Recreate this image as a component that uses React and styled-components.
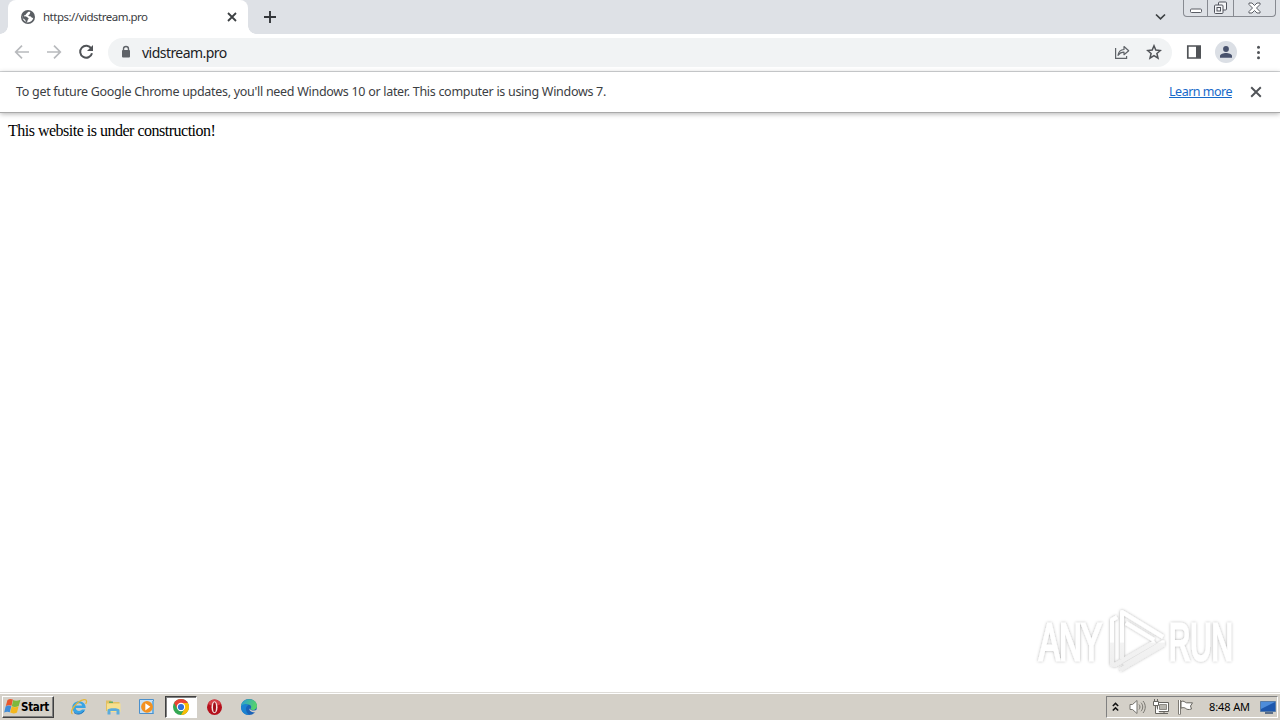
import React from 'react';
import styled, { createGlobalStyle } from 'styled-components';

const GlobalStyle = createGlobalStyle`
  body {
    margin: 0;
    background: #fff;
    overflow: hidden;
  }
  svg {
    display: block;
    flex: none;
  }
`;

const Screen = styled.div`
  position: relative;
  display: flex;
  flex-direction: column;
  width: 1280px;
  height: 720px;
  background: #fff;
`;

const TabStrip = styled.div`
  display: flex;
  height: 34px;
  background: #dee1e6;
`;

const Tab = styled.div`
  position: relative;
  display: flex;
  align-items: center;
  box-sizing: border-box;
  width: 240px;
  height: 34px;
  margin-left: 8px;
  padding: 0 11px 0 13px;
  background: #fff;
  border-radius: 8px 8px 0 0;

  &::before,
  &::after {
    content: '';
    position: absolute;
    bottom: 0;
    width: 8px;
    height: 8px;
  }
  &::before {
    left: -8px;
    background: radial-gradient(circle at 0 0, transparent 7.5px, #fff 8px);
  }
  &::after {
    right: -8px;
    background: radial-gradient(circle at 100% 0, transparent 7.5px, #fff 8px);
  }
`;

const Label = styled.span`
  font-family: ${p => p.$font || "'Noto Sans', sans-serif"};
  font-size: ${p => p.$size}px;
  letter-spacing: ${p => p.$spacing || 0}px;
  line-height: 16px;
  font-weight: ${p => p.$weight || 400};
  color: ${p => p.$color || '#3c4043'};
  white-space: nowrap;
`;

const TabTitle = styled(Label)`
  flex: 1;
  margin-left: 8px;
`;

const NewTab = styled.div`
  padding: 11px 0 0 16px;
`;

const Chevron = styled.div`
  margin-left: auto;
  padding: 13px 17px 0 0;
`;

const WindowButtons = styled.div`
  display: flex;
  box-sizing: border-box;
  width: 93px;
  height: 17px;
  margin-right: 4px;
  border: 1px solid #878a91;
  border-top: 0;
  border-radius: 0 0 4px 4px;
`;

const WindowButton = styled.div`
  display: flex;
  align-items: center;
  justify-content: center;
  width: ${p => p.$width}px;
  border-left: ${p => (p.$first ? 0 : '1px solid #878a91')};
`;

const Toolbar = styled.div`
  display: flex;
  align-items: center;
  box-sizing: border-box;
  height: 38px;
  padding: 0 12px 1px 12px;
  border-bottom: 1px solid #d6d8da;
  background: #fff;
`;

const NavButtons = styled.div`
  display: flex;
  gap: 12px;
`;

const Omnibox = styled.div`
  display: flex;
  align-items: center;
  box-sizing: border-box;
  width: 1064px;
  height: 29px;
  margin-left: 12px;
  padding: 0 10px 0 12px;
  border-radius: 15px;
  background: #f1f3f4;
`;

const Url = styled(Label)`
  flex: 1;
  margin-left: 10px;
  padding-top: 1px;
`;

const OmniboxIcons = styled.div`
  display: flex;
  gap: 16px;
`;

const ToolbarIcons = styled.div`
  display: flex;
  align-items: center;
  margin-left: 14px;
`;

const Avatar = styled.div`
  display: flex;
  align-items: center;
  justify-content: center;
  width: 22px;
  height: 22px;
  margin: 0 11px 0 14px;
  border-radius: 50%;
  background: #dbdfe5;
`;

const InfoBar = styled.div`
  display: flex;
  align-items: center;
  box-sizing: border-box;
  height: 41px;
  padding: 0 18px 0 16px;
  border-bottom: 1px solid #a9a9a9;
  background: #fff;
  box-shadow: 0 1px 5px rgba(0, 0, 0, 0.3);
`;

const LearnMore = styled(Label)`
  margin: 0 18px 0 auto;
  text-decoration: underline;
`;

const Page = styled.main`
  flex: 1;
  padding: 9px 8px;
  font-family: 'Liberation Serif', serif;
  font-size: 16px;
  line-height: 18px;
  letter-spacing: -0.5px;
  color: #000;
`;

const Watermark = styled.div`
  position: absolute;
  left: 1030px;
  top: 600px;
`;

const Taskbar = styled.footer`
  display: flex;
  align-items: center;
  box-sizing: border-box;
  height: 28px;
  padding: 1px 2px 1px 2px;
  border-top: 1px solid #dedcd8;
  background: #d4d0c8;
  box-shadow: inset 0 1px 0 #fff;
`;

const StartButton = styled.div`
  display: flex;
  align-items: center;
  box-sizing: border-box;
  width: 52px;
  height: 22px;
  padding-left: 1px;
  border: 1px solid;
  border-color: #fff #404040 #404040 #fff;
  box-shadow: inset -1px -1px 0 #808080;
`;

const Pinned = styled.div`
  display: flex;
  margin-left: 9px;
  gap: 2px;
`;

const TaskButton = styled.div`
  display: flex;
  align-items: center;
  justify-content: center;
  box-sizing: border-box;
  width: 32px;
  height: 22px;
  border: 1px solid transparent;
  ${p =>
    p.$active &&
    `
    border-color: #404040 #fff #fff #404040;
    background: #fff;
    box-shadow: inset 1px 1px 0 #808080;
  `}
`;

const Tray = styled.div`
  display: flex;
  align-items: center;
  box-sizing: border-box;
  width: 172px;
  height: 22px;
  margin-left: auto;
  padding-left: 5px;
  border: 1px solid;
  border-color: #808080 #fff #fff #808080;
`;

const TrayItem = styled.div`
  display: flex;
  margin-left: ${p => p.$left || 0}px;
`;

const Cross = ({ size, color = '#3c4043', width = 1.8 }) => (
  <svg width={size} height={size} viewBox="0 0 10 10">
    <path d="M1 1l8 8M9 1l-8 8" stroke={color} strokeWidth={width} />
  </svg>
);

const GlobeIcon = () => (
  <svg width="14" height="14" viewBox="0 0 14 14">
    <circle cx="7" cy="7" r="7" fill="#5a5e63" />
    <path d="M8.2 1.7C6 1.5 7 3 5.6 3.5 4.6 4 5 5 4 5.2c-.7.1-1.3.4-1 .9.6.8 2.7.2 3.4 1.2.5.7 1.4.6 1.2 1.5-.2.8-1.2.8-1 1.8.1.6-.5 1.3-.9 1.3C3 11.3 1.4 9.3 1.6 6.8L2 5.500 1.8 8.200c1 1 2 .8 2.500 2L5.400 12.300c4 .5 6.500-1.500 6.900-4.500-1 .4-1.800-.3-2.300-1C9.200 6 7.500 6.500 7.300 5.600c-.2-1 1.500-.8 1.500-1.700 0-.7.6-1 .4-2z" fill="#fff" />
  </svg>
);

const ArrowIcon = ({ flip }) => (
  <svg width="20" height="20" viewBox="0 0 20 20">
    <g transform={flip ? 'translate(20 0) scale(-1 1)' : undefined} fill="none" stroke="#b8babd" strokeWidth="1.7">
      <path d="M17 10H4M10 3.700L3.700 10l6.300 6.300" />
    </g>
  </svg>
);

const ReloadIcon = () => (
  <svg width="20" height="20" viewBox="0 0 20 20">
    <path d="M15.300 6.600A6 6 0 1 0 16 11.200" fill="none" stroke="#505357" strokeWidth="2" />
    <path d="M17 3v6h-6z" fill="#505357" />
  </svg>
);

const LockIcon = () => (
  <svg width="12" height="14" viewBox="0 0 12 14">
    <path d="M3.500 6V4a2.500 2.500 0 0 1 5 0v2" fill="none" stroke="#5f6368" strokeWidth="1.400" />
    <rect x="2" y="5" width="8" height="7.500" rx="1" fill="#5f6368" />
  </svg>
);

const ShareIcon = () => (
  <svg width="16" height="16" viewBox="0 0 16 16" fill="none" stroke="#5f6368" strokeWidth="1.200">
    <path d="M1.600 4v10.400h11V12" />
    <path d="M4 11.300c.5-3.600 2.500-5.600 6-5.800V2.500l4.700 4.200-4.700 4V8.200c-2.700 0-4.500 1-6 3.100z" strokeLinejoin="round" />
  </svg>
);

const StarIcon = () => (
  <svg width="16" height="16" viewBox="0 0 16 16">
    <path d="M8 1.800l1.800 4.300 4.600.4-3.500 3 1.100 4.600L8 11.600l-4 2.500 1.100-4.600-3.500-3 4.600-.4z" fill="none" stroke="#505357" strokeWidth="1.500" />
  </svg>
);

const PanelIcon = () => (
  <svg width="15" height="14" viewBox="0 0 15 14">
    <path d="M1.800 1h12.400v12H1.800z" fill="none" stroke="#505357" strokeWidth="1.700" />
    <path d="M10 1h5v12h-5z" fill="#505357" />
  </svg>
);

const PersonIcon = () => (
  <svg width="14" height="14" viewBox="0 0 14 14" fill="#47516c">
    <circle cx="7" cy="4" r="2.900" />
    <path d="M1 12.800V11c0-2 3.500-3 6-3s6 1 6 3v1.800z" />
  </svg>
);

const MenuIcon = () => (
  <svg width="20" height="16" viewBox="0 0 20 16" fill="#505357">
    <circle cx="10.500" cy="3.300" r="1.500" />
    <circle cx="10.500" cy="8.500" r="1.500" />
    <circle cx="10.500" cy="13.700" r="1.500" />
  </svg>
);

const FlagLogo = () => (
  <svg width="17" height="17" viewBox="0 0 17 17">
    <path d="M3.500 2C5.500.5 7 .7 8.900 1.600L7.500 7.800C5.600 6.900 4 6.900 1.800 8.100z" fill="#e8572c" />
    <path d="M9.200 2c2 1 4 1 7.300-.3L14.700 8c-2.600 1.200-4.800 1.200-6.900.3z" fill="#7eb83c" />
    <path d="M1.600 8.500c2.100-1.200 3.700-1.100 5.700-.3l-1.500 6c-1.900-.8-3.600-.7-5.600.4z" fill="#3f8cd8" />
    <path d="M7.700 8.500c2 .9 4.300.9 6.900-.2L13 14.500c-2.300 1.200-4.500 1.200-6.800.1z" fill="#f4b71e" />
  </svg>
);

const ExplorerIcon = () => (
  <svg width="18" height="18" viewBox="0 0 18 18">
    <path d="M15.700 10.100H5.800c.2 3.400 5 3.500 6.200 1.400h3.300c-2.200 6.900-13.100 5.700-13-2.100C2.500 1.300 15.900.9 15.700 10.100zM5.900 7.500h6.200c-.5-3-5.600-3-6.200 0z" fill="#39a4e4" />
    <path d="M2.500 16C-1.500 14 7 2.800 14 1.700c3.500-.4 2.700 2.500 1.700 4.300" fill="none" stroke="#e5b73a" strokeWidth="1.300" />
    <path d="M4 14.500c3 2.500 7.500 2 9.800-1.500" fill="none" stroke="#2270bb" strokeWidth="1" />
  </svg>
);

const FolderIcon = () => (
  <svg width="18" height="18" viewBox="0 0 18 18">
    <path d="M2 2.500h5l1 1.500h7.500v9H2z" fill="#e2c063" />
    <path d="M3 5.500h13.500V14H3z" fill="#f7e08e" />
    <path d="M5 3.500h4V5H5z" fill="#65ad65" />
    <path d="M3.500 16.500V12c0-2.500 12-2.500 12 0v4.500h-3V13h-6v3.500z" fill="#5babdc" />
  </svg>
);

const PlayerIcon = () => (
  <svg width="18" height="18" viewBox="0 0 18 18">
    <path d="M1.500 1.500h14v14h-14z" fill="#c6e0f5" stroke="#4b90cc" />
    <path d="M14 3h2v12h-2z" fill="#6eb0df" />
    <circle cx="9" cy="8.800" r="5.900" fill="#f39120" />
    <path d="M7.300 5.200v7.200l5-3.600z" fill="#fff" />
  </svg>
);

const ChromeIcon = () => (
  <svg width="18" height="18" viewBox="0 0 18 18">
    <circle cx="9" cy="9" r="8" fill="#34a853" />
    <path d="M2.070 5A8 8 0 0 1 15.930 5H9L5.540 11z" fill="#ea4335" />
    <path d="M15.930 5A8 8 0 0 1 9 17l3.460-6L9 5z" fill="#fbbc05" />
    <circle cx="9" cy="9" r="4.200" fill="#fff" />
    <circle cx="9" cy="9" r="3.100" fill="#2f71d9" />
  </svg>
);

const OperaIcon = () => (
  <svg width="18" height="18" viewBox="0 0 18 18">
    <ellipse cx="8.500" cy="9.200" rx="7.500" ry="7.800" fill="#b5101c" />
    <path d="M2 6C3.500 0 13.500 0 15 6 11.500 8 5.500 8 2 6z" fill="#d64047" />
    <ellipse cx="8.500" cy="9.200" rx="3" ry="6" fill="#f5e4e3" />
    <ellipse cx="8.500" cy="9.200" rx="1.500" ry="5" fill="#a30f19" />
  </svg>
);

const EdgeIcon = () => (
  <svg width="18" height="18" viewBox="0 0 18 18">
    <defs>
      <linearGradient id="edge" x1="0" y1="0" x2="1" y2=".3">
        <stop offset="0" stopColor="#289bd9" />
        <stop offset="1" stopColor="#55d36b" />
      </linearGradient>
    </defs>
    <circle cx="9" cy="9" r="8" fill="#1a62b7" />
    <path d="M1 8.500C1.500-1.500 17-1 17 8c0 4-5 4.800-6.600 3 1.800-2 .4-4.500-2.400-4.500-3 0-6 1-7 2z" fill="url(#edge)" />
    <path d="M1 9c1.500-4 6.500-3.600 7-1.500C4.500 9 6 14.500 9 16.900 4 17 1 13.500 1 9z" fill="#1b83d1" />
    <path d="M9.500 10.500c1.500 2.700 5 2.700 8 .7l.5 2c-1.500 1-3.500 1.500-5 1.100-2.500-.2-3.900-2-3.500-3.800z" fill="#d4d0c8" />
  </svg>
);

const TrayChevrons = () => (
  <svg width="7" height="10" viewBox="0 0 7 10" fill="none" stroke="#111" strokeWidth="1.500">
    <path d="M.8 4l2.700-2.600L6.200 4M.8 8.500l2.700-2.600 2.700 2.600" />
  </svg>
);

const SpeakerIcon = () => (
  <svg width="17" height="16" viewBox="0 0 17 16" fill="none" stroke="#77756f">
    <path d="M1 5.500h2.500L8 1.500v13l-4.500-4H1z" fill="#fff" strokeLinejoin="round" />
    <path d="M10 5.500c1.300 1.500 1.300 3.500 0 5M12 3.700c2.300 2.500 2.300 6 0 8.500M14 2c3 3.500 3 8.500 0 12" />
  </svg>
);

const NetworkIcon = () => (
  <svg width="17" height="16" viewBox="0 0 17 16" fill="none" stroke="#66645f">
    <path d="M4.500 3.500h11v9h-11z" fill="#fff" />
    <path d="M6.500 5.500h7v5h-7z" fill="#b7b5ae" stroke="#8d8b85" />
    <path d="M7 14.500h8M11 13v1" />
    <path d="M.5 2.500h5v4h-5zM1.500 0v2M4.500 0v2M2.500 7v7.500H7" fill="#fff" />
  </svg>
);

const FlagIcon = () => (
  <svg width="17" height="16" viewBox="0 0 17 16">
    <path d="M2.500 1v14.500" stroke="#67655f" strokeWidth="2.600" />
    <path d="M2.500 1v14" stroke="#fff" />
    <path d="M4 2.500c3-1.200 3.500.8 5.500 1.300H15.500l-2 3.200 1 3c-3 1-4.500.5-6-.7-1.500-1-3-.8-4.500-.2z" fill="#fff" stroke="#67655f" />
  </svg>
);

const DesktopIcon = () => (
  <svg width="16" height="16" viewBox="0 0 16 16">
    <path d="M.5 2.500h15v10H.5z" fill="#1d57ad" stroke="#577ca8" />
    <path d="M1 3h14L1 10z" fill="#4d8cda" />
    <path d="M5 14h8" stroke="#334f75" strokeWidth="1.500" />
  </svg>
);

const AnyRunLogo = () => (
  <svg width="214" height="82" viewBox="0 0 214 82" overflow="visible">
    <defs>
      <linearGradient id="word" gradientUnits="userSpaceOnUse" x1="0" y1="10" x2="0" y2="72">
        <stop offset=".52" stopColor="#fff" />
        <stop offset=".53" stopColor="#f3f3f3" />
        <stop offset="1" stopColor="#eeeeee" />
      </linearGradient>
      <filter id="glow" filterUnits="userSpaceOnUse" x="0" y="0" width="214" height="82">
        <feDropShadow dx="0" dy="0" stdDeviation="1.800" floodColor="#000" floodOpacity=".32" />
      </filter>
    </defs>
    <g filter="url(#glow)" fill="url(#word)" stroke="url(#word)" fontFamily="'Liberation Sans', sans-serif" fontSize="51">
      <text transform="translate(9 60) scale(.61 1)" textLength="103" strokeWidth="2.500">ANY</text>
      <text transform="translate(139 60) scale(.58 1)" textLength="110" strokeWidth="2.500">RUN</text>
    </g>
    <g filter="url(#glow)" fill="none" stroke="url(#word)" strokeWidth="4" strokeLinejoin="round">
      <path d="M87 17l-5 3v44l3 1L125 42" />
      <path d="M92 59V12l41 25" />
      <path d="M96 23l28 17" />
      <path d="M90 70l43-25v-3L94 65" strokeWidth="3.500" />
    </g>
  </svg>
);

const pinned = [
  { name: 'explorer', Icon: ExplorerIcon },
  { name: 'files', Icon: FolderIcon },
  { name: 'player', Icon: PlayerIcon },
  { name: 'chrome', Icon: ChromeIcon, active: true },
  { name: 'opera', Icon: OperaIcon },
  { name: 'edge', Icon: EdgeIcon },
];

const App = () => (
  <>
    <GlobalStyle />
    <Screen>
      <TabStrip>
        <Tab>
          <GlobeIcon />
          <TabTitle $size={11.5} $spacing={-0.5}>https://vidstream.pro</TabTitle>
          <Cross size={10} />
        </Tab>
        <NewTab>
          <svg width="12" height="12" viewBox="0 0 12 12">
            <path d="M6 0v12M0 6h12" stroke="#33363a" strokeWidth="1.900" />
          </svg>
        </NewTab>
        <Chevron>
          <svg width="11" height="8" viewBox="0 0 11 8">
            <path d="M1 1.500l4.500 4.300L10 1.500" fill="none" stroke="#3c4043" strokeWidth="1.700" />
          </svg>
        </Chevron>
        <WindowButtons>
          <WindowButton $width={24} $first>
            <svg width="12" height="14" viewBox="0 0 12 14">
              <rect x=".5" y="8" width="11" height="3.500" rx="1" fill="#fff" stroke="#5a5d65" />
            </svg>
          </WindowButton>
          <WindowButton $width={25}>
            <svg width="13" height="14" viewBox="0 0 13 14" fill="#f5f6f8" stroke="#50535c">
              <rect x="4.500" y="1" width="8" height="8" rx="1" />
              <rect x=".5" y="4" width="8.500" height="8.500" rx="1" />
              <rect x="3" y="6.500" width="3.500" height="3.500" />
            </svg>
          </WindowButton>
          <WindowButton $width={42}>
            <svg width="13" height="12" viewBox="0 0 13 12">
              <path d="M1 1h3l2.500 2.500L9 1h3v1.500L8.500 6 12 9.500V11H9L6.500 8.500 4 11H1V9.500L4.500 6 1 2.500z" fill="#fff" stroke="#5a5d65" />
            </svg>
          </WindowButton>
        </WindowButtons>
      </TabStrip>
      <Toolbar>
        <NavButtons>
          <ArrowIcon />
          <ArrowIcon flip />
          <ReloadIcon />
        </NavButtons>
        <Omnibox>
          <LockIcon />
          <Url $size={14} $spacing={-0.54} $color="#202124">vidstream.pro</Url>
          <OmniboxIcons>
            <ShareIcon />
            <StarIcon />
          </OmniboxIcons>
        </Omnibox>
        <ToolbarIcons>
          <PanelIcon />
          <Avatar>
            <PersonIcon />
          </Avatar>
          <MenuIcon />
        </ToolbarIcons>
      </Toolbar>
      <InfoBar>
        <Label $size={12.5} $spacing={-0.294}>
          To get future Google Chrome updates, you'll need Windows 10 or later. This computer is using Windows 7.
        </Label>
        <LearnMore $size={12.5} $spacing={-0.5} $color="#1769c9">Learn more</LearnMore>
        <Cross size={12} color="#505357" width={1.6} />
      </InfoBar>
      <Page>This website is under construction!</Page>
      <Taskbar>
        <StartButton>
          <FlagLogo />
          <Label $size={11.5} $weight={700} $color="#000" $spacing={-0.3} $font="'DejaVu Sans Condensed', 'DejaVu Sans', sans-serif">
            Start
          </Label>
        </StartButton>
        <Pinned>
          {pinned.map(({ name, Icon, active }) => (
            <TaskButton key={name} $active={active}>
              <Icon />
            </TaskButton>
          ))}
        </Pinned>
        <Tray>
          <TrayItem><TrayChevrons /></TrayItem>
          <TrayItem $left={10}><SpeakerIcon /></TrayItem>
          <TrayItem $left={7}><NetworkIcon /></TrayItem>
          <TrayItem $left={7}><FlagIcon /></TrayItem>
          <TrayItem $left={15}>
            <Label $size={11} $spacing={-0.1} $color="#000">8:48 AM</Label>
          </TrayItem>
          <TrayItem $left={10}><DesktopIcon /></TrayItem>
        </Tray>
      </Taskbar>
      <Watermark>
        <AnyRunLogo />
      </Watermark>
    </Screen>
  </>
);

export default App;
